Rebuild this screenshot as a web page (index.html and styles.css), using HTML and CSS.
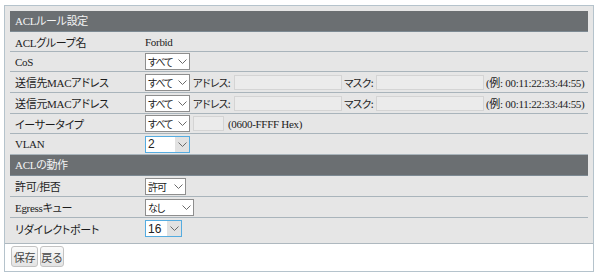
FILE: index.html
```html
<!DOCTYPE html>
<html lang="ja">
<head>
<meta charset="utf-8">
<title>ACLルール設定</title>
<link rel="stylesheet" href="styles.css">
</head>
<body>
<div class="panel">
  <div class="form">
    <div class="section-head">ACLルール設定</div>
    <div class="row">
      <div class="label">ACLグループ名</div>
      <div class="value">Forbid</div>
    </div>
    <div class="row">
      <div class="label">CoS</div>
      <div class="value">
        <span class="sel w45"><span class="sel-text">すべて</span><span class="sel-arrow"><svg width="9" height="5" viewBox="0 0 9 5"><polyline points="0.5,0.5 4.5,4.5 8.5,0.5"/></svg></span></span>
      </div>
    </div>
    <div class="row tall">
      <div class="label">送信先MACアドレス</div>
      <div class="value">
        <span class="sel w45"><span class="sel-text">すべて</span><span class="sel-arrow"><svg width="9" height="5" viewBox="0 0 9 5"><polyline points="0.5,0.5 4.5,4.5 8.5,0.5"/></svg></span></span>
        <span class="field-label addr">アドレス:</span>
        <span class="input mac"></span>
        <span class="field-label mask">マスク:</span>
        <span class="input mac"></span>
        <span class="hint ex">(例: 00:11:22:33:44:55)</span>
      </div>
    </div>
    <div class="row tall">
      <div class="label">送信元MACアドレス</div>
      <div class="value">
        <span class="sel w45"><span class="sel-text">すべて</span><span class="sel-arrow"><svg width="9" height="5" viewBox="0 0 9 5"><polyline points="0.5,0.5 4.5,4.5 8.5,0.5"/></svg></span></span>
        <span class="field-label addr">アドレス:</span>
        <span class="input mac"></span>
        <span class="field-label mask">マスク:</span>
        <span class="input mac"></span>
        <span class="hint ex">(例: 00:11:22:33:44:55)</span>
      </div>
    </div>
    <div class="row">
      <div class="label">イーサータイプ</div>
      <div class="value">
        <span class="sel w45"><span class="sel-text">すべて</span><span class="sel-arrow"><svg width="9" height="5" viewBox="0 0 9 5"><polyline points="0.5,0.5 4.5,4.5 8.5,0.5"/></svg></span></span>
        <span class="input etype"></span>
        <span class="hint hex">(0600-FFFF Hex)</span>
      </div>
    </div>
    <div class="row tall">
      <div class="label">VLAN</div>
      <div class="value">
        <span class="sel w45 focus"><span class="sel-text num">2</span><span class="sel-arrow"><svg width="9" height="5" viewBox="0 0 9 5"><polyline points="0.5,0.5 4.5,4.5 8.5,0.5"/></svg></span></span>
      </div>
    </div>
    <div class="section-head">ACLの動作</div>
    <div class="row tall">
      <div class="label">許可/拒否</div>
      <div class="value">
        <span class="sel w40"><span class="sel-text">許可</span><span class="sel-arrow"><svg width="9" height="5" viewBox="0 0 9 5"><polyline points="0.5,0.5 4.5,4.5 8.5,0.5"/></svg></span></span>
      </div>
    </div>
    <div class="row tall">
      <div class="label">Egressキュー</div>
      <div class="value">
        <span class="sel w49"><span class="sel-text">なし</span><span class="sel-arrow"><svg width="9" height="5" viewBox="0 0 9 5"><polyline points="0.5,0.5 4.5,4.5 8.5,0.5"/></svg></span></span>
      </div>
    </div>
    <div class="row tall last">
      <div class="label">リダイレクトポート</div>
      <div class="value">
        <span class="sel w37 focus"><span class="sel-text num">16</span><span class="sel-arrow"><svg width="9" height="5" viewBox="0 0 9 5"><polyline points="0.5,0.5 4.5,4.5 8.5,0.5"/></svg></span></span>
      </div>
    </div>
  </div>
  <div class="actions">
    <button class="btn save">保存</button>
    <button class="btn back">戻る</button>
  </div>
</div>
</body>
</html>
```

FILE: styles.css
```css
html, body {
  margin: 0;
  padding: 0;
  background: #ffffff;
}

body {
  font-family: "Liberation Serif", "Noto Sans CJK JP", serif;
  font-size: 11px;
  letter-spacing: -0.3px;
  font-feature-settings: "palt";
  color: #1c1c1c;
}

.panel {
  box-sizing: border-box;
  width: 590px;
  margin: 5px 0 0 4px;
  border: 1px solid #b5c3cc;
  background: #ffffff;
}

.form {
  background: #e6e6e6;
  padding: 5px 5px 4px 5px;
  border-bottom: 1px solid #aeb8bf;
}

.section-head {
  box-sizing: border-box;
  height: 21px;
  line-height: 21px;
  padding-left: 5px;
  background: #6b6f72;
  color: #f4f4f4;
  border-bottom: 1px solid #7d8a93;
}

.row {
  box-sizing: border-box;
  display: flex;
  align-items: center;
  height: 20px;
  border-bottom: 1px solid #a9b4bb;
}

.row.tall {
  height: 21px;
}

.row.last {
  border-bottom: none;
}

.label {
  box-sizing: border-box;
  width: 135px;
  padding-left: 5px;
  white-space: nowrap;
}

.value {
  display: flex;
  align-items: center;
  white-space: nowrap;
}

.sel {
  box-sizing: border-box;
  display: inline-flex;
  align-items: stretch;
  justify-content: space-between;
  height: 17px;
  border: 1px solid #8e8e8e;
  background: #ffffff;
  font-family: "Liberation Sans", "Noto Sans CJK JP", sans-serif;
  font-size: 10px;
  letter-spacing: -1px;
  color: #1a1a1a;
}

.sel-text {
  display: flex;
  align-items: center;
  padding-left: 2px;
}

.sel-text.num {
  font-size: 12px;
  letter-spacing: 0;
  color: #222;
}

.sel-arrow {
  display: flex;
  align-items: center;
  justify-content: center;
  width: 14px;
}

.sel-arrow svg polyline {
  fill: none;
  stroke: #6a6a6a;
  stroke-width: 1;
}

.sel.focus {
  border-color: #55ace0;
}

.sel.focus .sel-arrow {
  background: #e2e2e2;
}

.w45 { width: 45px; }
.w40 { width: 41px; }
.w49 { width: 49px; }
.w37 { width: 37px; }

.field-label {
  box-sizing: border-box;
  font-family: "Noto Sans CJK JP", "Liberation Sans", sans-serif;
  font-size: 10.5px;
  letter-spacing: -0.5px;
  color: #1c1c1c;
}

.field-label.addr {
  width: 41px;
  margin-left: 3px;
}

.field-label.mask {
  width: 32px;
  margin-left: 2px;
}

.input {
  box-sizing: border-box;
  display: inline-block;
  height: 15px;
  background: #ebebeb;
  border: 1px solid #d4d4d4;
}

.input.mac {
  width: 108px;
}

.input.etype {
  width: 31px;
  margin-left: 3px;
}

.hint.ex {
  margin-left: 2px;
}

.hint.hex {
  margin-left: 4px;
}

.actions {
  display: flex;
  gap: 2px;
  padding: 2px 0 4px 6px;
}

.btn {
  box-sizing: border-box;
  height: 21px;
  padding: 0;
  border: 1px solid #c3c3c3;
  border-radius: 3px;
  background: linear-gradient(#fbfbfb, #e3e3e3);
  font-family: "Noto Sans CJK JP", "Liberation Sans", sans-serif;
  font-size: 11px;
  letter-spacing: -0.3px;
  color: #444444;
}

.btn.save { width: 27px; }
.btn.back { width: 24px; }
```
